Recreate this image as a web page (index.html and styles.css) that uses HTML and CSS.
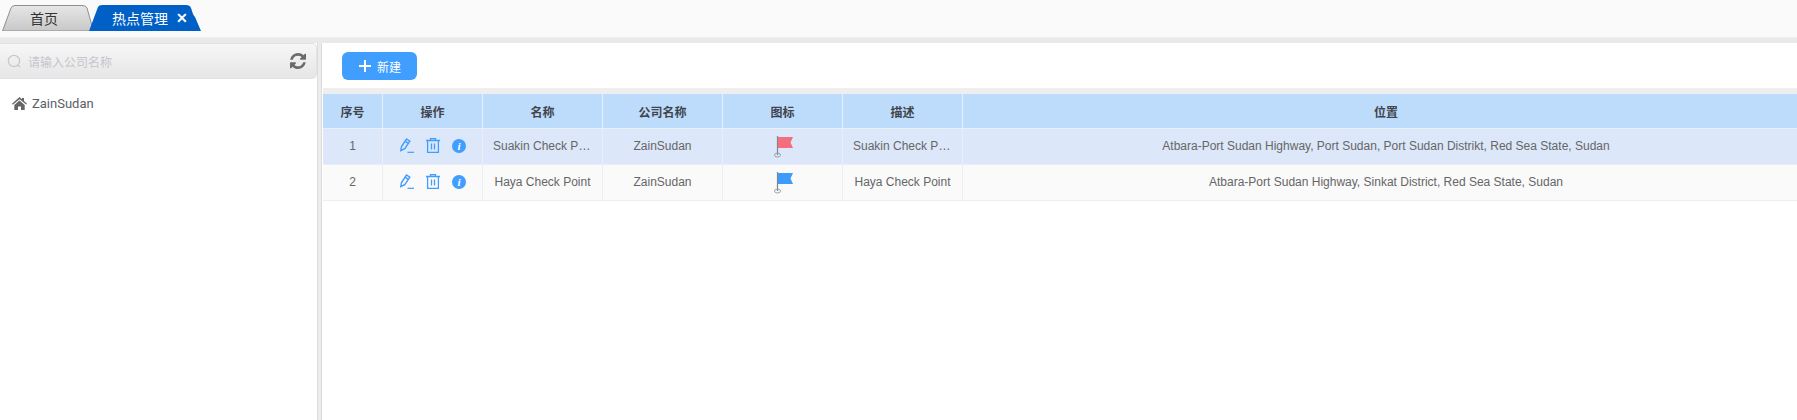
FILE: index.html
```html
<!DOCTYPE html>
<html lang="zh">
<head>
<meta charset="utf-8">
<title>热点管理</title>
<link rel="stylesheet" href="styles.css">
</head>
<body>
<header class="topbar">
  <div class="tab tab-home">
    <svg class="tab-shape" width="92" height="26" viewBox="0 0 92 26"><defs><linearGradient id="g" x1="0" y1="0" x2="0" y2="1"><stop offset="0" stop-color="#e6e6e6"/><stop offset="1" stop-color="#c8c8c8"/></linearGradient></defs><path d="M0.500 26 L9 3 Q10 .5 13 .5 L80 .5 Q84 .5 85 3 L91.500 26 Z" fill="url(#g)" stroke="#8e8e8e"/></svg>
    <span class="tab-label">首页</span>
  </div>
  <div class="tab tab-active">
    <svg class="tab-shape" width="113" height="26" viewBox="0 0 113 26"><path d="M0 26 L9 2 Q10 0 13 0 L97 0 Q101 0 102 3 L104 9 Q105 11 106 12 L112 26 Z" fill="#0060c6"/></svg>
    <span class="tab-label">热点管理</span>
    <span class="tab-close">✕</span>
  </div>
</header>
<div class="band"></div>
<main class="layout">
  <aside class="side">
    <div class="search">
      <svg class="search-ico" width="15" height="15" viewBox="0 0 15 15"><circle cx="7" cy="7" r="5.600" fill="none" stroke="#c9c9c9" stroke-width="1.300"/><path d="M11 11l2 2" stroke="#c9c9c9" stroke-width="1.300"/></svg>
      <span class="search-text">请输入公司名称</span>
      <svg class="refresh" width="16" height="16" viewBox="0 0 1536 1536"><path fill="#6b6b6b" d="M1511 928q0 5-1 7-64 268-268 434.500t-478 166.500q-146 0-282.500-55t-243.500-157l-129 129q-19 19-45 19t-45-19-19-45v-448q0-26 19-45t45-19h448q26 0 45 19t19 45-19 45l-137 137q71 66 161 102t187 36q134 0 250-65t186-179q11-17 53-117 8-23 30-23h192q13 0 22.500 9.500t9.500 22.500zm25-800v448q0 26-19 45t-45 19h-448q-26 0-45-19t-19-45 19-45l138-138q-148-137-349-137-134 0-250 65t-186 179q-11 17-53 117-8 23-30 23h-199q-13 0-22.500-9.500t-9.500-22.500v-7q65-268 270-434.500t480-166.500q146 0 284 55.500t245 156.500l130-129q19-19 45-19t45 19 19 45z"/></svg>
    </div>
    <div class="tree">
      <svg class="home" width="15" height="13" viewBox="0 0 15 13"><path fill="#666" d="M7.500 0 L10 2.200V1h2v3l3 2.700-.8.900L7.500 2.200.8 7.800 0 6.700zM2.300 8 7.500 3.600 12.700 8V13H9V9.500H6V13H2.300z"/></svg>
      <span>ZainSudan</span>
    </div>
  </aside>
  <section class="content">
    <div class="toolbar">
      <button class="btn-new"><span class="plus"></span>新建</button>
    </div>
    <table class="grid">
      <colgroup><col class="c1"><col class="c2"><col class="c3"><col class="c4"><col class="c5"><col class="c6"><col></colgroup>
      <thead>
        <tr><th>序号</th><th>操作</th><th>名称</th><th>公司名称</th><th>图标</th><th>描述</th><th>位置</th></tr>
      </thead>
      <tbody>
        <tr class="selected">
          <td>1</td>
          <td><div class="ops">
            <svg width="14" height="15" viewBox="0 0 14 15"><path d="M.8 12.500 L1.500 8.500 L6.500 1 L9.800 3.200 L4.800 10.700 Z M5 3.200 L8.300 5.400" fill="none" stroke="#409eff" stroke-width="1.400"/><path d="M7.500 14.300h6.500" stroke="#409eff" stroke-width="1.200"/></svg>
            <svg width="14" height="15" viewBox="0 0 14 15"><path d="M0 2.500h14M4.500 2.500V.7h5v1.800M1.600 2.500v11.800h10.800V2.500M5.500 5.500v6M8.500 5.500v6" fill="none" stroke="#409eff" stroke-width="1.300"/></svg>
            <svg width="14" height="14" viewBox="0 0 15 15"><circle cx="7.500" cy="7.500" r="7.500" fill="#409eff"/><text class="info-i" x="7.500" y="12" text-anchor="middle">i</text></svg>
          </div></td>
          <td><span class="clip">Suakin Check Point</span></td>
          <td>ZainSudan</td>
          <td><svg class="flag" width="20" height="24" viewBox="0 0 20 24"><path d="M4.500 2v19" stroke="#7d8794" stroke-width="1.200"/><path d="M5 3h15l-2.500 5.500L20 14H5z" fill="#f56e7f"/><ellipse cx="4.500" cy="21" rx="3" ry="2" fill="none" stroke="#9aa0a8"/></svg></td>
          <td><span class="clip">Suakin Check Point</span></td>
          <td>Atbara-Port Sudan Highway, Port Sudan, Port Sudan Distrikt, Red Sea State, Sudan</td>
        </tr>
        <tr>
          <td>2</td>
          <td><div class="ops">
            <svg width="14" height="15" viewBox="0 0 14 15"><path d="M.8 12.500 L1.500 8.500 L6.500 1 L9.800 3.200 L4.800 10.700 Z M5 3.200 L8.300 5.400" fill="none" stroke="#409eff" stroke-width="1.400"/><path d="M7.500 14.300h6.500" stroke="#409eff" stroke-width="1.200"/></svg>
            <svg width="14" height="15" viewBox="0 0 14 15"><path d="M0 2.500h14M4.500 2.500V.7h5v1.800M1.600 2.500v11.800h10.800V2.500M5.500 5.500v6M8.500 5.500v6" fill="none" stroke="#409eff" stroke-width="1.300"/></svg>
            <svg width="14" height="14" viewBox="0 0 15 15"><circle cx="7.500" cy="7.500" r="7.500" fill="#409eff"/><text class="info-i" x="7.500" y="12" text-anchor="middle">i</text></svg>
          </div></td>
          <td><span class="clip">Haya Check Point</span></td>
          <td>ZainSudan</td>
          <td><svg class="flag" width="20" height="24" viewBox="0 0 20 24"><path d="M4.500 2v19" stroke="#7d8794" stroke-width="1.200"/><path d="M5 3h15l-2.500 5.500L20 14H5z" fill="#3f9bfb"/><ellipse cx="4.500" cy="21" rx="3" ry="2" fill="none" stroke="#9aa0a8"/></svg></td>
          <td><span class="clip">Haya Check Point</span></td>
          <td>Atbara-Port Sudan Highway, Sinkat District, Red Sea State, Sudan</td>
        </tr>
      </tbody>
    </table>
  </section>
</main>
</body>
</html>
```
FILE: styles.css
```css
* { box-sizing: border-box; }
html, body { margin: 0; height: 100%; overflow: hidden; }
body {
  display: flex;
  flex-direction: column;
  background: #fff;
  color: #666;
  font: 12px "Liberation Sans", "Noto Sans CJK SC", sans-serif;
}
.topbar {
  display: flex;
  align-items: flex-end;
  height: 37px;
  flex: none;
  padding: 0 0 6px 2px;
  background: #fafafa;
}
.tab {
  position: relative;
  height: 26px;
  display: flex;
  align-items: center;
  font-size: 14px;
}
.tab-shape { position: absolute; left: 0; top: 0; }
.tab-label, .tab-close { position: relative; }
.tab-home { width: 92px; color: #333; justify-content: center; padding-right: 8px; }
.tab-active { width: 113px; margin-left: -5px; color: #fff; padding-left: 23px; }
.tab-close { margin-left: 8px; font-size: 14px; font-weight: 700; }
.band { height: 6px; flex: none; background: #e9e9e9; border-top: 1px solid #f0f0f0; }
.layout { flex: 1; display: flex; min-height: 0; background: #ececec; }
.side {
  width: 318px;
  flex: none;
  background: #fff;
  border-right: 1px solid #dcdcdc;
}
.search {
  height: 36px;
  display: flex;
  align-items: center;
  padding: 0 10px 0 7px;
  background: linear-gradient(#f7f7f7, #e6e6e6);
  border: 1px solid #e2e2e6;
  border-left: 0;
  border-radius: 0 5px 5px 0;
}
.search-text { margin-left: 6px; flex: 1; color: #c4c6cc; }
.tree {
  display: flex;
  align-items: center;
  gap: 5px;
  padding: 17px 0 0 12px;
  font: 13px Roboto, sans-serif;
  color: #5a5e66;
}
.content {
  flex: 1;
  min-width: 0;
  margin-left: 3px;
  padding-left: 1px;
  border-left: 1px solid #dcdcdc;
  background: #fff;
  overflow: hidden;
}
.toolbar {
  height: 51px;
  padding: 9px 0 0 19px;
  background: #fff;
  border-bottom: 6px solid #eee;
}
.btn-new {
  display: flex;
  align-items: center;
  gap: 6px;
  width: 75px;
  height: 28px;
  padding: 0 0 0 17px;
  border: 0;
  border-radius: 6px;
  background: #409eff;
  color: #fff;
  font: 12px "Liberation Sans", "Noto Sans CJK SC", sans-serif;
}
.plus {
  width: 12px;
  height: 12px;
  background:
    linear-gradient(#fff, #fff) center / 12px 2px no-repeat,
    linear-gradient(#fff, #fff) center / 2px 12px no-repeat;
}
.grid {
  width: calc(100% + 12px);
  border-collapse: separate;
  border-spacing: 0;
  table-layout: fixed;
}
.c1 { width: 60px; }
.c2 { width: 100px; }
.c3, .c4, .c5, .c6 { width: 120px; }
th, td {
  padding: 0 10px;
  text-align: center;
  border-right: 1px solid #ebeef5;
  border-bottom: 1px solid #ebeef5;
  white-space: nowrap;
}
th {
  height: 35px;
  background: #bddcfb;
  color: #3f444d;
  font-weight: 700;
  border-right-color: #e6f0fb;
  border-bottom-color: #e6f0fb;
}
td { height: 36px; padding-bottom: 2px; background: #fafafa; color: #666; }
th:last-child, td:last-child { border-right: 0; }
.selected td { background: #dce7f9; }
.clip {
  display: block;
  overflow: hidden;
  text-overflow: ellipsis;
}
.ops { display: flex; justify-content: center; align-items: center; gap: 12px; }
.info-i { fill: #fff; font: italic 700 12px "Liberation Serif", serif; }
.flag { display: block; margin: 0 auto; }
```
